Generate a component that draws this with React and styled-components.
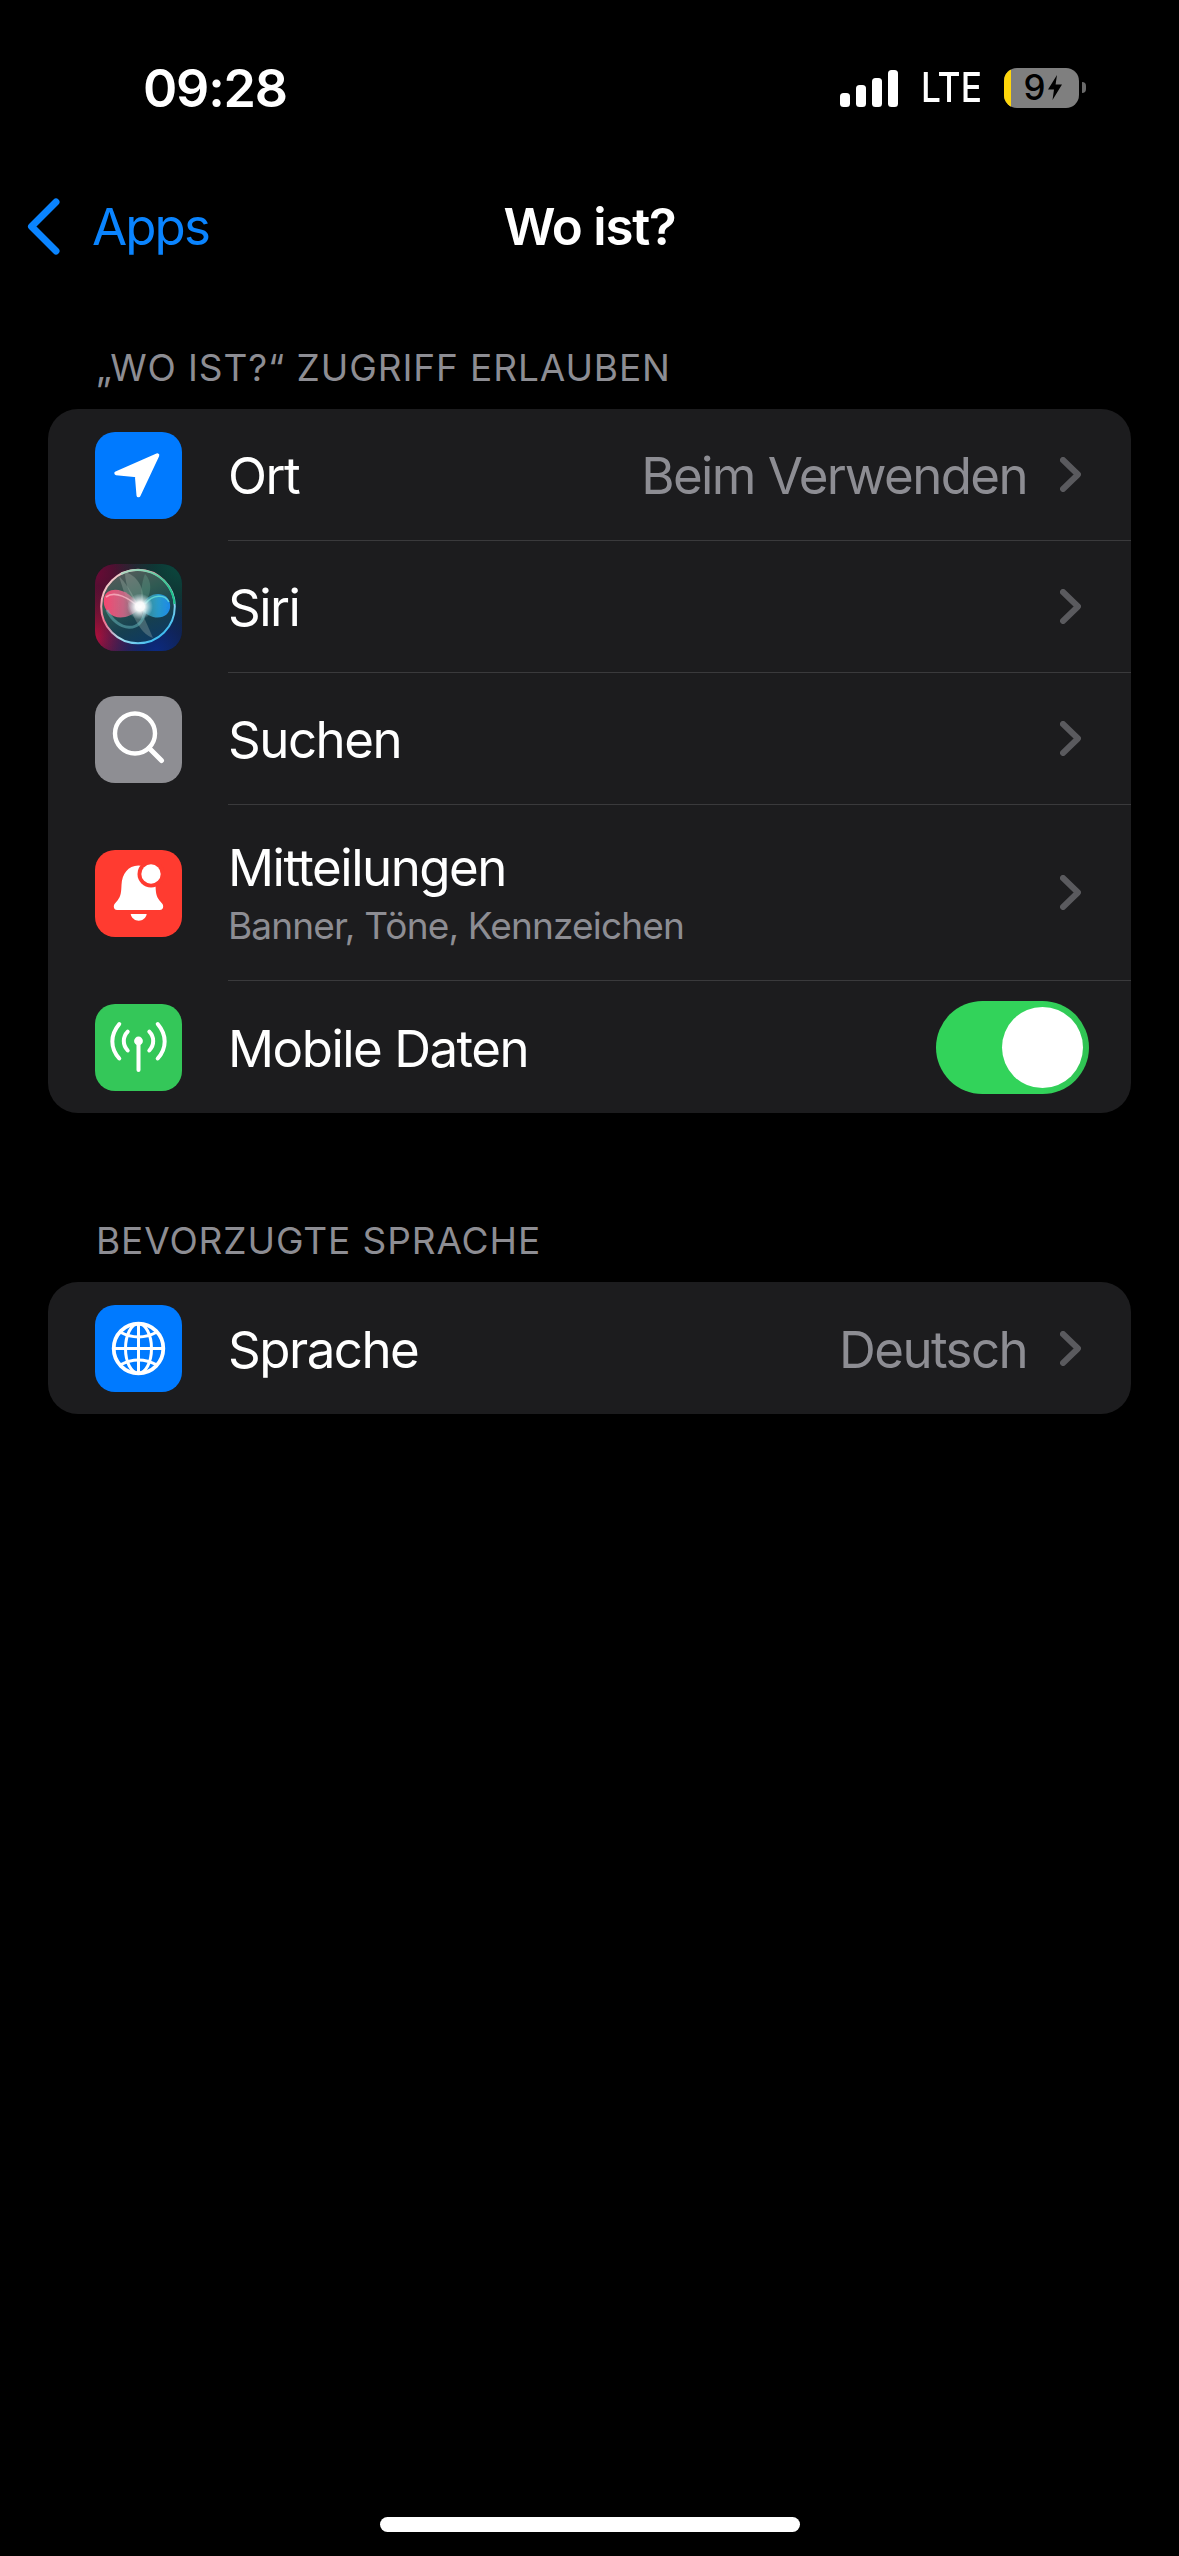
import React from 'react'
import styled, { createGlobalStyle } from 'styled-components'

const GlobalStyle = createGlobalStyle`
  html, body {
    margin: 0;
    padding: 0;
    background: #000;
  }
  body {
    font-family: Inter, "Noto Sans", "Liberation Sans", sans-serif;
    -webkit-font-smoothing: antialiased;
  }
`

const Screen = styled.div`
  width: 1179px;
  height: 2556px;
  background: #000;
  color: #fff;
  display: flex;
  flex-direction: column;
  overflow: hidden;
`

const StatusBar = styled.div`
  height: 175px;
  padding: 0 93px 0 143px;
  box-sizing: border-box;
  display: flex;
  align-items: center;
  justify-content: space-between;
`

const Time = styled.div`
  font-size: 52px;
  font-weight: 600;
  letter-spacing: -1.2px;
  line-height: 1;
  padding-top: 2px;
`

const StatusRight = styled.div`
  display: flex;
  align-items: center;
`

const SignalBars = styled.div`
  display: flex;
  align-items: flex-end;
  gap: 6px;
  height: 37px;
  margin-top: 2px;
`

const SignalBar = styled.div`
  width: 10px;
  height: ${({ $h }) => $h}px;
  background: #fff;
  border-radius: 3.5px;
`

const Lte = styled.div`
  font-size: 41px;
  font-weight: 500;
  line-height: 1;
  margin-left: 23px;
  width: 60px;
  transform: scaleX(0.86);
  transform-origin: left center;
`

const Battery = styled.div`
  display: flex;
  width: 75px;
  height: 40px;
  margin-left: 23px;
  border-radius: 13px;
  overflow: hidden;
  background: #7f7f7f;
`

const BatteryFill = styled.div`
  width: 7px;
  background: #ffd60a;
`

const BatteryBody = styled.div`
  flex: 1;
  display: flex;
  align-items: center;
  justify-content: center;
  gap: 2px;
  padding-right: 5px;
  color: #000;
  font-size: 35px;
  font-weight: 500;
  line-height: 1;
`

const BatteryNub = styled.div`
  width: 4px;
  height: 11px;
  margin-left: 3px;
  background: #6a6a6a;
  border-radius: 0 5px 5px 0;
`

const NavBar = styled.div`
  height: 102px;
  display: grid;
  grid-template-columns: 1fr auto 1fr;
  align-items: center;
`

const BackLink = styled.div`
  display: flex;
  align-items: center;
  gap: 31px;
  padding-left: 26px;
  color: #0a84ff;
  font-size: 51px;
  line-height: 1;
  letter-spacing: -1.9px;
`

const NavTitle = styled.div`
  font-size: 51px;
  font-weight: 600;
  line-height: 1;
  letter-spacing: -1.2px;
`

const SectionHeader = styled.div`
  margin: ${({ $top }) => $top}px 0 21px 96px;
  height: 40px;
  line-height: 40px;
  font-size: 37px;
  letter-spacing: 0.9px;
  color: #8d8d93;
`

const Card = styled.div`
  margin: 0 48px;
  background: #1c1c1e;
  border-radius: 30px;
  overflow: hidden;
`

const Row = styled.div`
  display: flex;
  align-items: center;
  height: ${({ $h }) => $h || 132}px;
  padding-left: 47px;
`

const IconBox = styled.div`
  flex: none;
  width: 87px;
  height: 87px;
  border-radius: 20px;
  overflow: hidden;
  background: ${({ $bg }) => $bg};
  svg {
    display: block;
  }
`

const RowBody = styled.div`
  flex: 1;
  align-self: stretch;
  margin-left: 46px;
  padding-right: 50px;
  display: flex;
  align-items: center;
  border-bottom: ${({ $last }) => ($last ? 'none' : '1.5px solid #3a3a3c')};
`

const RowText = styled.div`
  flex: 1;
  display: flex;
  flex-direction: column;
  gap: 7px;
  padding-top: 3px;
`

const RowTitle = styled.div`
  font-size: 51px;
  line-height: 60px;
  letter-spacing: -1.5px;
`

const RowSub = styled.div`
  font-size: 37px;
  line-height: 42px;
  letter-spacing: -0.85px;
  margin-bottom: 3px;
  color: #8d8d93;
`

const RowValue = styled.div`
  font-size: 51px;
  line-height: 60px;
  letter-spacing: -1.6px;
  color: #8d8d93;
  margin-right: 33px;
  padding-top: 3px;
`

const Toggle = styled.div`
  width: 153px;
  height: 93px;
  margin-right: -8px;
  padding: 6px;
  box-sizing: border-box;
  border-radius: 47px;
  background: linear-gradient(90deg, #32d35a 70%, #30c253);
  display: flex;
  justify-content: flex-end;
`

const Knob = styled.div`
  width: 81px;
  height: 81px;
  border-radius: 50%;
  background: #fff;
`

const HomeBar = styled.div`
  margin: auto auto 24px;
  width: 420px;
  height: 15px;
  border-radius: 8px;
  background: #fff;
`

const BackChevron = () => (
  <svg width="35" height="57" viewBox="0 0 35 57">
    <path d="M30 4 L5.5 28.5 L30 53" fill="none" stroke="#0a84ff" strokeWidth="7" strokeLinecap="round" strokeLinejoin="round" />
  </svg>
)

const Chevron = () => (
  <svg width="21" height="35" viewBox="0 0 21 35">
    <path d="M3 3 L18 17.5 L3 32" fill="none" stroke="#5a5a5e" strokeWidth="6" strokeLinecap="round" strokeLinejoin="round" />
  </svg>
)

const Bolt = () => (
  <svg width="14" height="25" viewBox="0 0 14 25">
    <path d="M9 0 L0 14.5 L6 14.5 L4.5 25 L14 9.5 L7.6 9.5 Z" fill="#000" />
  </svg>
)

const LocationIcon = () => (
  <svg width="87" height="87" viewBox="0 0 87 87">
    <path d="M62.3 23.3 L21.3 41.3 L41.8 43.2 L43.5 63.3 Z" fill="#fff" stroke="#fff" strokeWidth="4" strokeLinejoin="round" />
  </svg>
)

const SiriIcon = () => (
  <svg width="87" height="87" viewBox="0 0 87 87">
    <defs>
      <radialGradient id="siriTL" cx="0" cy="0.1" r="0.7">
        <stop offset="0" stopColor="#6a0a35" />
        <stop offset="1" stopColor="#6a0a35" stopOpacity="0" />
      </radialGradient>
      <radialGradient id="siriTR" cx="1" cy="0" r="0.8">
        <stop offset="0" stopColor="#0a4a3e" />
        <stop offset="1" stopColor="#0a4a3e" stopOpacity="0" />
      </radialGradient>
      <radialGradient id="siriBL" cx="0" cy="0.85" r="0.6">
        <stop offset="0" stopColor="#b00f3c" />
        <stop offset="1" stopColor="#b00f3c" stopOpacity="0" />
      </radialGradient>
      <radialGradient id="siriBR" cx="0.7" cy="1" r="0.7">
        <stop offset="0" stopColor="#0c2a80" />
        <stop offset="1" stopColor="#0c2a80" stopOpacity="0" />
      </radialGradient>
      <linearGradient id="siriRing" x1="0.1" y1="0.2" x2="0.75" y2="1">
        <stop offset="0" stopColor="#f0c8c8" />
        <stop offset="0.35" stopColor="#f0708e" />
        <stop offset="0.65" stopColor="#a9dff0" />
        <stop offset="1" stopColor="#30b8f0" />
      </linearGradient>
      <linearGradient id="siriRingTop" x1="0" y1="0" x2="1" y2="0.6">
        <stop offset="0" stopColor="#b8d8c4" />
        <stop offset="1" stopColor="#1cc48c" />
      </linearGradient>
      <radialGradient id="siriCore">
        <stop offset="0" stopColor="#fff" />
        <stop offset="0.35" stopColor="#fff" stopOpacity="0.95" />
        <stop offset="1" stopColor="#d8f0ff" stopOpacity="0" />
      </radialGradient>
      <linearGradient id="siriBall" x1="0.15" y1="0" x2="0.6" y2="1">
        <stop offset="0" stopColor="#5c5a5c" />
        <stop offset="0.4" stopColor="#2f5a52" />
        <stop offset="0.75" stopColor="#163f50" />
        <stop offset="1" stopColor="#0e3a62" />
      </linearGradient>
      <linearGradient id="siriPink" x1="0" y1="0" x2="1" y2="0">
        <stop offset="0" stopColor="#f6466f" />
        <stop offset="0.55" stopColor="#e8688e" stopOpacity="0.8" />
        <stop offset="1" stopColor="#d8a0b0" stopOpacity="0.3" />
      </linearGradient>
      <linearGradient id="siriBlue" x1="0" y1="0" x2="1" y2="0">
        <stop offset="0" stopColor="#5fd0d0" stopOpacity="0.35" />
        <stop offset="0.6" stopColor="#2aa8e0" stopOpacity="0.85" />
        <stop offset="1" stopColor="#1c88e8" />
      </linearGradient>
      <filter id="siriSoft" x="-30%" y="-30%" width="160%" height="160%">
        <feGaussianBlur stdDeviation="0.7" />
      </filter>
    </defs>
    <rect width="87" height="87" fill="#141c28" />
    <rect width="87" height="87" fill="url(#siriTL)" />
    <rect width="87" height="87" fill="url(#siriTR)" />
    <rect width="87" height="87" fill="url(#siriBL)" />
    <rect width="87" height="87" fill="url(#siriBR)" />
    <circle cx="43" cy="42.5" r="37" fill="url(#siriBall)" />
    <path d="M24 12 C36 24 46 46 58 74 C44 70 34 46 24 12 Z" fill="#b9c9c0" fillOpacity="0.28" filter="url(#siriSoft)" />
    <path d="M30 8 C44 12 52 28 46 44 C36 34 30 22 30 8 Z" fill="#c8d4c8" fillOpacity="0.25" filter="url(#siriSoft)" />
    <path d="M50 10 C60 20 54 36 46 44 C46 30 46 20 50 10 Z" fill="#8fd8b8" fillOpacity="0.2" filter="url(#siriSoft)" />
    <path d="M45 44 C36 24 12 20 9 34 C6 52 28 62 45 44 Z" fill="url(#siriPink)" filter="url(#siriSoft)" />
    <path d="M11 33 C20 26 34 34 45 44" fill="none" stroke="#fbc0cc" strokeOpacity="0.7" strokeWidth="1.6" />
    <path d="M45 44 C52 26 73 26 75 40 C77 54 58 60 45 44 Z" fill="url(#siriBlue)" filter="url(#siriSoft)" />
    <path d="M50 40 C58 30 70 30 74 38" fill="none" stroke="#70e8d8" strokeOpacity="0.7" strokeWidth="1.6" />
    <path d="M12 46 C22 68 48 70 50 46" fill="none" stroke="#72c8cc" strokeOpacity="0.45" strokeWidth="3" filter="url(#siriSoft)" />
    <circle cx="43" cy="42.5" r="36.8" fill="none" stroke="url(#siriRing)" strokeWidth="2" />
    <path d="M26 10 A36.8 36.8 0 0 1 79.5 40" fill="none" stroke="url(#siriRingTop)" strokeWidth="2" />
    <circle cx="45" cy="42.5" r="13" fill="url(#siriCore)" />
  </svg>
)

const SearchIcon = () => (
  <svg width="87" height="87" viewBox="0 0 87 87" fill="none" stroke="#fff" strokeLinecap="round">
    <circle cx="40" cy="37.5" r="20" strokeWidth="4.4" />
    <path d="M54 52 L66.5 64.5" strokeWidth="5" />
  </svg>
)

const BellIcon = () => (
  <svg width="87" height="87" viewBox="0 0 87 87">
    <path
      d="M43.5 15.5 C33 15.5 27 24 26.5 35 C26.2 42 26 46 22.5 50.5 L19.5 54 C18 56.5 19 60 22 60 L65 60 C68 60 69 56.5 67.5 54 L64.5 50.5 C61 46 60.8 42 60.5 35 C60 24 54 15.5 43.5 15.5 Z"
      fill="#fff"
    />
    <path d="M35.7 64 L51.7 64 C51 68 47.5 70.7 43.7 70.7 C39.9 70.7 36.4 68 35.7 64 Z" fill="#fff" />
    <circle cx="56" cy="24" r="13.5" fill="#ff3b30" />
    <circle cx="56" cy="24" r="9.7" fill="#fff" />
  </svg>
)

const AntennaIcon = () => (
  <svg width="87" height="87" viewBox="0 0 87 87" fill="none" stroke="#fff" strokeWidth="4" strokeLinecap="round">
    <circle cx="43.5" cy="37" r="4.4" fill="#fff" stroke="none" />
    <path d="M43.5 38 L43.5 66" />
    <path d="M24.3 20 C15 31 15 44 24.3 54.5" />
    <path d="M32.7 27.7 C27.5 33 27.5 41 32.7 46.5" />
    <path d="M62.7 20 C72 31 72 44 62.7 54.5" />
    <path d="M54.3 27.7 C59.5 33 59.5 41 54.3 46.5" />
  </svg>
)

const GlobeIcon = () => (
  <svg width="87" height="87" viewBox="0 0 87 87" fill="none" stroke="#fff" strokeWidth="3">
    <circle cx="43.5" cy="43.5" r="24.8" strokeWidth="3.8" />
    <ellipse cx="43.5" cy="43.5" rx="13" ry="24.8" />
    <path d="M43.5 18.7 L43.5 68.3" />
    <path d="M18.7 43.5 L68.3 43.5" />
    <path d="M25 27 Q43.5 37 62 27" />
    <path d="M25 60 Q43.5 50 62 60" />
  </svg>
)

const accessRows = [
  { id: 'ort', title: 'Ort', value: 'Beim Verwenden', bg: '#007aff', icon: <LocationIcon /> },
  { id: 'siri', title: 'Siri', bg: '#111a24', icon: <SiriIcon /> },
  { id: 'suchen', title: 'Suchen', bg: '#8e8e93', icon: <SearchIcon /> },
  { id: 'mitteilungen', title: 'Mitteilungen', sub: 'Banner, Töne, Kennzeichen', bg: '#ff3b30', icon: <BellIcon />, h: 176 },
  { id: 'daten', title: 'Mobile Daten', bg: '#34c759', icon: <AntennaIcon />, toggle: true },
]

const SettingsRow = ({ item, last }) => (
  <Row $h={item.h}>
    <IconBox $bg={item.bg}>{item.icon}</IconBox>
    <RowBody $last={last}>
      <RowText>
        <RowTitle>{item.title}</RowTitle>
        {item.sub && <RowSub>{item.sub}</RowSub>}
      </RowText>
      {item.value && <RowValue>{item.value}</RowValue>}
      {item.toggle ? (
        <Toggle>
          <Knob />
        </Toggle>
      ) : (
        <Chevron />
      )}
    </RowBody>
  </Row>
)

const App = () => {
  return (
    <Screen>
      <GlobalStyle />
      <StatusBar>
        <Time>09:28</Time>
        <StatusRight>
          <SignalBars>
            {[14, 22, 29, 37].map((h) => (
              <SignalBar key={h} $h={h} />
            ))}
          </SignalBars>
          <Lte>LTE</Lte>
          <Battery>
            <BatteryFill />
            <BatteryBody>
              9
              <Bolt />
            </BatteryBody>
          </Battery>
          <BatteryNub />
        </StatusRight>
      </StatusBar>
      <NavBar>
        <BackLink>
          <BackChevron />
          Apps
        </BackLink>
        <NavTitle>Wo ist?</NavTitle>
      </NavBar>
      <SectionHeader $top={71}>„WO IST?“ ZUGRIFF ERLAUBEN</SectionHeader>
      <Card>
        {accessRows.map((item, i) => (
          <SettingsRow key={item.id} item={item} last={i === accessRows.length - 1} />
        ))}
      </Card>
      <SectionHeader $top={108}>BEVORZUGTE SPRACHE</SectionHeader>
      <Card>
        <SettingsRow
          last
          item={{ id: 'sprache', title: 'Sprache', value: 'Deutsch', bg: '#007aff', icon: <GlobeIcon /> }}
        />
      </Card>
      <HomeBar />
    </Screen>
  )
}

export default App
